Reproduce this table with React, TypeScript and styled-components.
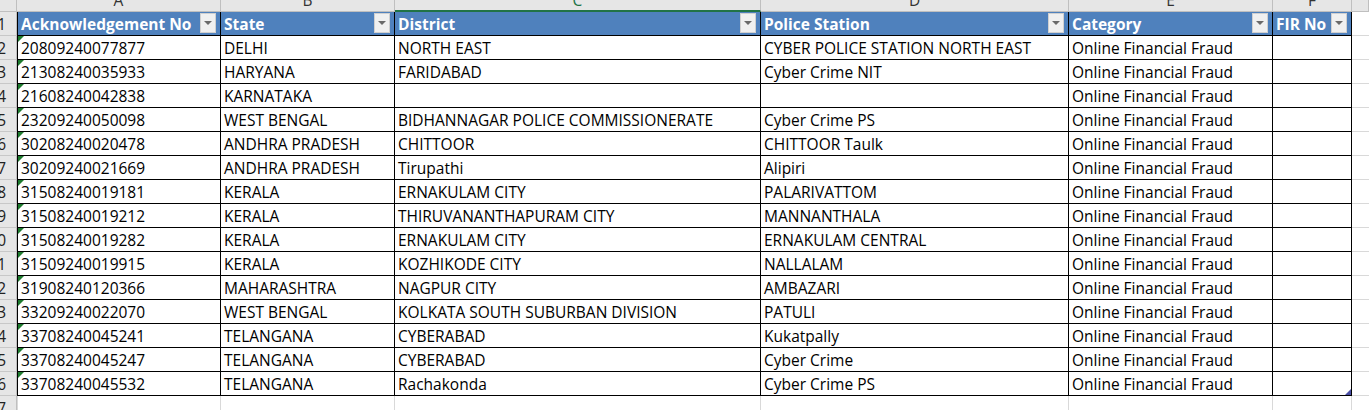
import React from 'react';
import styled, { createGlobalStyle, css } from 'styled-components';

const GlobalStyle = createGlobalStyle`
  html, body { margin: 0; padding: 0; background: #fff; overflow: hidden; }
  body { font-family: "Open Sans", "Liberation Sans", Arial, sans-serif; font-size: 15.5px; color: #000; }
`;

const COLS = '17px 204px 174px 366px 308px 204px 79px 1fr';

const Sheet = styled.div`
  width: 1369px;
  height: 410px;
  overflow: hidden;
`;

const Row = styled.div<{ $h: number }>`
  display: grid;
  grid-template-columns: ${COLS};
  height: ${(p) => p.$h}px;
`;

const LetterCell = styled.div<{ $selected?: boolean }>`
  box-sizing: border-box;
  background: #e6e6e6;
  border-right: 1px solid #bfbfbf;
  border-bottom: ${(p) => (p.$selected ? '2px solid #217346' : '1px solid #bfbfbf')};
  color: ${(p) => (p.$selected ? '#217346' : '#333')};
  overflow: hidden;
  text-align: center;
  line-height: 18px;
  & > span {
    display: block;
    margin-top: -9px;
  }
`;

const Corner = styled.div`
  box-sizing: border-box;
  background: #e6e6e6;
  border-right: 1px solid #bfbfbf;
  border-bottom: 1px solid #bfbfbf;
`;

const RowNum = styled.div`
  box-sizing: border-box;
  background: #e6e6e6;
  border-right: 1px solid #bfbfbf;
  border-bottom: 1px solid #c8c8c8;
  display: flex;
  justify-content: flex-end;
  padding: 1px 10px 0 0;
  line-height: 22px;
  overflow: hidden;
  white-space: nowrap;
  color: #222;
`;

const Cell = styled.div<{ $first?: boolean; $flag?: boolean; $light?: boolean }>`
  box-sizing: border-box;
  position: relative;
  border-right: 1px solid ${(p) => (p.$light ? '#d9d9d9' : '#000')};
  border-bottom: 1px solid ${(p) => (p.$light ? '#d9d9d9' : '#000')};
  ${(p) =>
    p.$first &&
    css`
      border-left: 1px solid ${p.$light ? '#d9d9d9' : '#000'};
    `}
  padding: 1px 3px 0 3px;
  line-height: 22px;
  white-space: nowrap;
  overflow: hidden;
  ${(p) =>
    p.$flag &&
    css`
      &::before {
        content: '';
        position: absolute;
        left: 0;
        top: 0;
        width: 6px;
        height: 6px;
        background: #1e7b2e;
        clip-path: polygon(0 0, 100% 0, 0 100%);
      }
    `}
`;

const Spare = styled.div`
  box-sizing: border-box;
  border-bottom: 1px solid #d9d9d9;
`;

const HeadCell = styled.div<{ $first?: boolean }>`
  box-sizing: border-box;
  background: #4f81bd;
  color: #fff;
  font-weight: bold;
  border-right: 1px solid #000;
  border-bottom: 1px solid #000;
  ${(p) =>
    p.$first &&
    css`
      border-left: 1px solid #000;
    `}
  display: flex;
  align-items: flex-start;
  padding: 1px 4px 0 3px;
  line-height: 22px;
  white-space: nowrap;
  overflow: hidden;
`;

const FilterButton = styled.div`
  box-sizing: border-box;
  margin-left: auto;
  flex: none;
  width: 16px;
  height: 20px;
  background: #f0f0f0;
  border: 1px solid #d0d0d0;
  display: flex;
  align-items: center;
  justify-content: center;
  &::after {
    content: '';
    width: 0;
    height: 0;
    border-left: 4px solid transparent;
    border-right: 4px solid transparent;
    border-top: 4px solid #6a6a6a;
  }
`;

const LastCell = styled(Cell)`
  &::after {
    content: '';
    position: absolute;
    right: 0;
    bottom: 0;
    width: 6px;
    height: 6px;
    background: #4a4fa6;
    clip-path: polygon(100% 0, 100% 100%, 0 100%);
  }
`;

const headers = ['Acknowledgement No', 'State', 'District', 'Police Station', 'Category', 'FIR No'];

const rows: string[][] = [
  ['20809240077877', 'DELHI', 'NORTH EAST', 'CYBER POLICE STATION NORTH EAST', 'Online Financial Fraud'],
  ['21308240035933', 'HARYANA', 'FARIDABAD', 'Cyber Crime NIT', 'Online Financial Fraud'],
  ['21608240042838', 'KARNATAKA', '', '', 'Online Financial Fraud'],
  ['23209240050098', 'WEST BENGAL', 'BIDHANNAGAR POLICE COMMISSIONERATE', 'Cyber Crime PS', 'Online Financial Fraud'],
  ['30208240020478', 'ANDHRA PRADESH', 'CHITTOOR', 'CHITTOOR Taulk', 'Online Financial Fraud'],
  ['30209240021669', 'ANDHRA PRADESH', 'Tirupathi', 'Alipiri', 'Online Financial Fraud'],
  ['31508240019181', 'KERALA', 'ERNAKULAM CITY', 'PALARIVATTOM', 'Online Financial Fraud'],
  ['31508240019212', 'KERALA', 'THIRUVANANTHAPURAM CITY', 'MANNANTHALA', 'Online Financial Fraud'],
  ['31508240019282', 'KERALA', 'ERNAKULAM CITY', 'ERNAKULAM CENTRAL', 'Online Financial Fraud'],
  ['31509240019915', 'KERALA', 'KOZHIKODE CITY', 'NALLALAM', 'Online Financial Fraud'],
  ['31908240120366', 'MAHARASHTRA', 'NAGPUR CITY', 'AMBAZARI', 'Online Financial Fraud'],
  ['33209240022070', 'WEST BENGAL', 'KOLKATA SOUTH SUBURBAN DIVISION', 'PATULI', 'Online Financial Fraud'],
  ['33708240045241', 'TELANGANA', 'CYBERABAD', 'Kukatpally', 'Online Financial Fraud'],
  ['33708240045247', 'TELANGANA', 'CYBERABAD', 'Cyber Crime', 'Online Financial Fraud'],
  ['33708240045532', 'TELANGANA', 'Rachakonda', 'Cyber Crime PS', 'Online Financial Fraud'],
];

const letters = ['A', 'B', 'C', 'D', 'E', 'F'];

export default function App() {
  return (
    <>
      <GlobalStyle />
      <Sheet>
        <Row $h={12}>
          <Corner />
          {letters.map((l) => (
            <LetterCell key={l} $selected={l === 'C'}>
              <span>{l}</span>
            </LetterCell>
          ))}
          <LetterCell />
        </Row>
        <Row $h={24}>
          <RowNum>1</RowNum>
          {headers.map((h, i) => (
            <HeadCell key={h} $first={i === 0}>
              <span>{h}</span>
              <FilterButton />
            </HeadCell>
          ))}
          <Spare />
        </Row>
        {rows.map((r, ri) => {
          const isLast = ri === rows.length - 1;
          return (
            <Row $h={24} key={r[0]}>
              <RowNum>{ri + 2}</RowNum>
              {r.map((v, ci) => (
                <Cell key={ci} $first={ci === 0} $flag={ci === 0}>
                  {v}
                </Cell>
              ))}
              {isLast ? <LastCell /> : <Cell />}
              <Spare />
            </Row>
          );
        })}
        <Row $h={24}>
          <RowNum>17</RowNum>
          {letters.map((l, i) => (
            <Cell key={l} $light $first={i === 0} />
          ))}
          <Spare />
        </Row>
      </Sheet>
    </>
  );
}
